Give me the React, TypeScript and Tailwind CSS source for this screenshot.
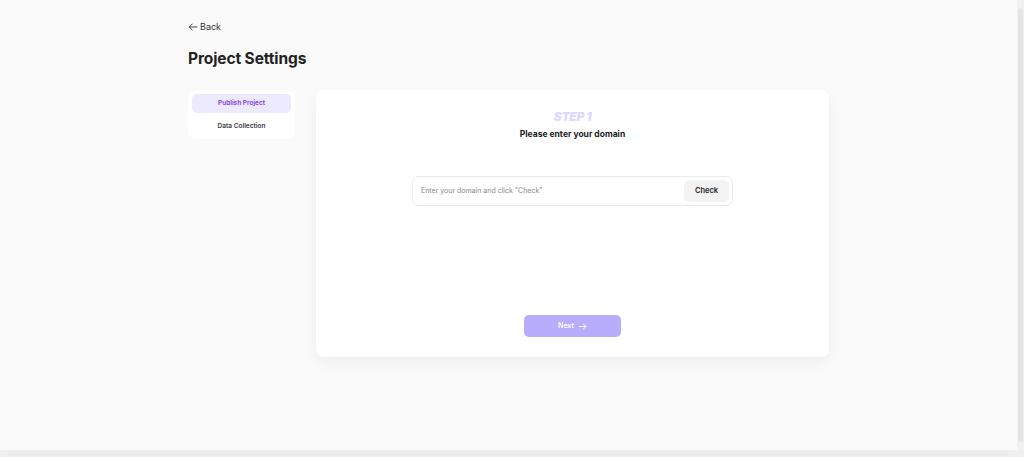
import React from "react";

export default function App() {
  return (
    <div
      className="h-[457px] w-[1024px] flex flex-col bg-[#fafafa] overflow-hidden"
      style={{ fontFamily: "Inter, 'Noto Sans', sans-serif" }}
    >
      <div className="flex h-[450px]">
        <div className="w-[1017px] h-[450px]">
          <div className="w-[641px] ml-[188px] pt-[21px]">
            <button className="flex items-center gap-[2px] text-[9px] text-[#333] h-[12px]">
              <svg width="10" height="8" viewBox="0 0 10 8" fill="none" stroke="#333" strokeWidth="0.9" strokeLinecap="round" strokeLinejoin="round">
                <path d="M9 4H1.2M4.2 1L1.2 4l3 3" />
              </svg>
              <span>Back</span>
            </button>
            <h1 className="mt-[16px] text-[15.5px] leading-[20px] font-bold text-[#222] tracking-[-0.1px]">
              Project Settings
            </h1>
            <div className="mt-[21px] flex items-start gap-[21px]">
              <div className="w-[107px] bg-white rounded-[8px] pt-[4px] px-[4px] pb-[1px] flex flex-col">
                <div className="h-[19px] pt-[1px] rounded-[5px] bg-[#ede9fe] text-[#7c3aed] text-[6.5px] font-semibold flex items-center justify-center">
                  Publish Project
                </div>
                <div className="h-[25px] pt-[3px] text-[#3a3a3a] text-[6.5px] font-semibold flex items-center justify-center">
                  Data Collection
                </div>
              </div>
              <div className="w-[513px] h-[267px] bg-white rounded-[7px] shadow-[0_6px_14px_rgba(0,0,0,0.05)] flex flex-col items-center">
                <div className="mt-[19px] text-[12px] leading-[16px] font-black italic text-[#ddd6fe] tracking-[-0.3px]">
                  STEP 1
                </div>
                <div className="mt-[3px] text-[8.5px] leading-[12px] font-bold text-[#1a1a1a]">
                  Please enter your domain
                </div>
                <div className="mt-[36px] w-[321px] h-[30px] border border-[#ebebeb] rounded-[7px] flex items-center pl-[8px] pr-[3px]">
                  <span className="flex-1 text-[7px] text-[#888]">Enter your domain and click "Check"</span>
                  <div className="w-[45px] h-[22px] rounded-[5px] bg-[#f3f3f3] text-[7.5px] font-semibold text-[#222] flex items-center justify-center">
                    Check
                  </div>
                </div>
                <div className="mt-auto mb-[20px] w-[97px] h-[22px] rounded-[5px] bg-[#b8acfc] text-white text-[7px] font-semibold flex items-center justify-center gap-[4px]">
                  <span>Next</span>
                  <svg width="9" height="7" viewBox="0 0 9 7" fill="none" stroke="white" strokeWidth="0.9" strokeLinecap="round" strokeLinejoin="round">
                    <path d="M1 3.5h7M5.2 0.8L8 3.5 5.2 6.2" />
                  </svg>
                </div>
              </div>
            </div>
          </div>
        </div>
        <div className="w-[7px] h-[450px] bg-[#f1f1f1] flex flex-col items-center py-[8px]">
          <div className="w-[5px] flex-1 rounded-full bg-[#e4e4e4]" />
        </div>
      </div>
      <div className="h-[7px] flex bg-[#f0f0f0]">
        <div className="flex-1 flex items-center px-[8px]">
          <div className="h-[5px] flex-1 rounded-full bg-[#ececec]" />
        </div>
        <div className="w-[7px] bg-[#f0f0f0]" />
      </div>
    </div>
  );
}
